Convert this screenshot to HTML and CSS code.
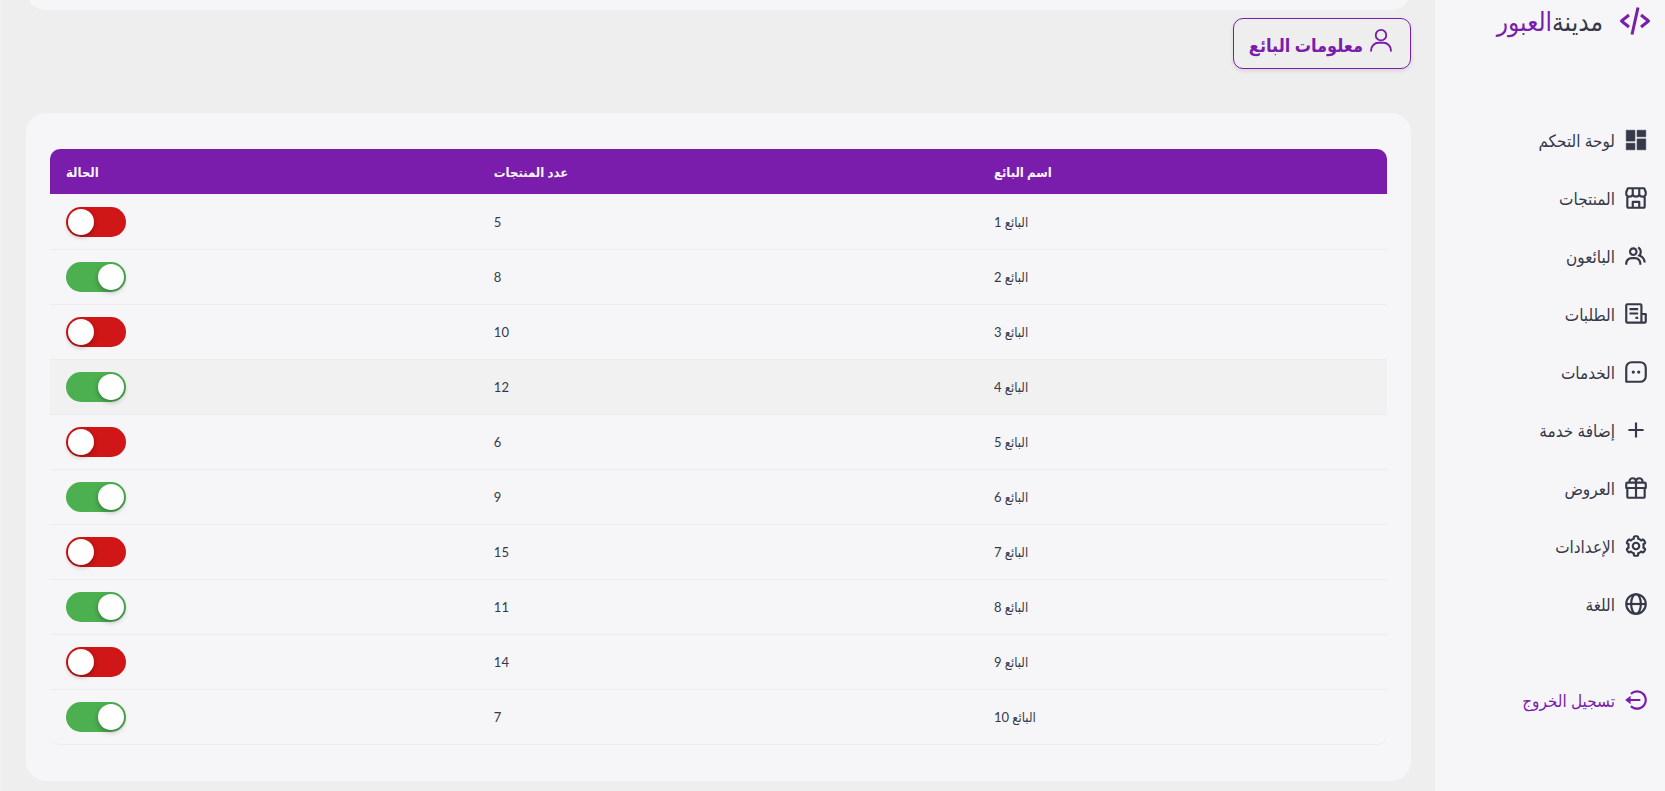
FILE: index.html
```html
<!DOCTYPE html>
<html lang="ar" dir="rtl">
<head>
<meta charset="utf-8">
<title>مدينة العبور</title>
<link rel="stylesheet" href="styles.css">
</head>
<body>
<aside class="sidebar">
  <a class="logo" href="#">
    <svg class="logo-icon" viewBox="0 0 24 24" aria-hidden="true"><path d="m7.375 16.781 1.25-1.562L4.601 12l4.024-3.219-1.25-1.562-5 4a1 1 0 0 0 0 1.562l5 4zm9.25-9.562-1.25 1.562L19.399 12l-4.024 3.219 1.25 1.562 5-4a1 1 0 0 0 0-1.562l-5-4zm-1.649-4.003-4 18-1.953-.434 4-18z"/></svg>
    <span class="logo-name"><span class="logo-first">مدينة</span><span>العبور</span></span>
  </a>
  <nav class="menu">
    <a class="item" href="#"><svg class="icon" viewBox="0 0 24 24" aria-hidden="true"><path d="M3 3h8v10H3zM3 15h8v6H3zM13 11h8v10h-8zM13 3h8v6h-8z" stroke="currentColor" stroke-width=".6" stroke-linejoin="round"/></svg><span>لوحة التحكم</span></a>
    <a class="item" href="#"><svg class="icon line" viewBox="0 0 24 24" aria-hidden="true"><path d="M4 11v9a1 1 0 0 0 1 1h14a1 1 0 0 0 1-1v-9M4.500 3h15L21 6.500v1.500a2.800 2.800 0 0 1-3 2.800c-1.300 0-2.500-.7-3-1.800-.5 1.100-1.700 1.800-3 1.800S9.500 10.100 9 9c-.5 1.100-1.700 1.800-3 1.800A2.800 2.800 0 0 1 3 8V6.500zM9 3v6M15 3v6M9 21v-5.500h6V21"/></svg><span>المنتجات</span></a>
    <a class="item" href="#"><svg class="icon" viewBox="0 0 24 24" aria-hidden="true"><path d="M16.604 11.048a5.67 5.67 0 0 0 .751-3.44c-.179-1.784-1.175-3.361-2.803-4.44l-1.105 1.666c1.119.742 1.800 1.799 1.918 2.974a3.693 3.693 0 0 1-1.072 2.986l-1.192 1.192 1.618.475C18.951 13.701 19 17.957 19 18h2c0-1.789-.956-5.285-4.396-6.952z"/><path d="M9.500 12c2.206 0 4-1.794 4-4s-1.794-4-4-4-4 1.794-4 4 1.794 4 4 4zm0-6c1.103 0 2 .897 2 2s-.897 2-2 2-2-.897-2-2 .897-2 2-2zm1.500 7H8c-3.309 0-6 2.691-6 6v1h2v-1c0-2.206 1.794-4 4-4h3c2.206 0 4 1.794 4 4v1h2v-1c0-3.309-2.691-6-6-6z"/></svg><span>البائعون</span></a>
    <a class="item" href="#"><svg class="icon line" viewBox="0 0 24 24" aria-hidden="true"><path d="M17 20H4a1 1 0 0 1-1-1V4a1 1 0 0 1 1-1h12a1 1 0 0 1 1 1zM17 20h3a1 1 0 0 0 1-1v-7h-4M6 7.500h8M6 11.500h8M11.500 15.500H14"/></svg><span>الطلبات</span></a>
    <a class="item" href="#"><svg class="icon line" viewBox="0 0 24 24" aria-hidden="true"><path d="M3 21V8a5 5 0 0 1 5-5h8a5 5 0 0 1 5 5v8a5 5 0 0 1-5 5z"/><circle class="dot" cx="9.500" cy="12" r="1.500"/><circle class="dot" cx="14.500" cy="12" r="1.500"/></svg><span>الخدمات</span></a>
    <a class="item" href="#"><svg class="icon" viewBox="0 0 24 24" aria-hidden="true"><path d="M19 11h-6V5h-2v6H5v2h6v6h2v-6h6z"/></svg><span>إضافة خدمة</span></a>
    <a class="item" href="#"><svg class="icon line" viewBox="0 0 24 24" aria-hidden="true"><path d="M4 12v8a1 1 0 0 0 1 1h14a1 1 0 0 0 1-1v-8M4 7h16a1 1 0 0 1 1 1v4H3V8a1 1 0 0 1 1-1zM12 7v14M12 7c0-2.500-1-4-3-4S6 4.500 6 5.500V7M12 7c0-2.500 1-4 3-4s3 1.500 3 2.500V7"/></svg><span>العروض</span></a>
    <a class="item" href="#"><svg class="icon" viewBox="0 0 24 24" aria-hidden="true"><path d="M12 16c2.206 0 4-1.794 4-4s-1.794-4-4-4-4 1.794-4 4 1.794 4 4 4zm0-6c1.084 0 2 .916 2 2s-.916 2-2 2-2-.916-2-2 .916-2 2-2z"/><path d="m2.845 16.136 1 1.730c.531.917 1.809 1.261 2.730.730l.529-.306A8.100 8.100 0 0 0 9 19.402V20c0 1.103.897 2 2 2h2c1.103 0 2-.897 2-2v-.598a8.132 8.132 0 0 0 1.896-1.111l.529.306c.923.530 2.198.188 2.731-.731l.999-1.729a2.001 2.001 0 0 0-.731-2.732l-.505-.292a7.718 7.718 0 0 0 0-2.224l.505-.292a2.002 2.002 0 0 0 .731-2.732l-.999-1.729c-.531-.920-1.808-1.265-2.731-.732l-.529.306A8.100 8.100 0 0 0 15 4.598V4c0-1.103-.897-2-2-2h-2c-1.103 0-2 .897-2 2v.598a8.132 8.132 0 0 0-1.896 1.111l-.529-.306c-.924-.531-2.200-.187-2.731.732l-.999 1.729a2.001 2.001 0 0 0 .731 2.732l.505.292a7.683 7.683 0 0 0 0 2.223l-.505.292a2.003 2.003 0 0 0-.731 2.733zm3.326-2.758A5.703 5.703 0 0 1 6 12c0-.462.058-.926.170-1.378a.999.999 0 0 0-.470-1.108l-1.123-.650.998-1.729 1.145.662a.997.997 0 0 0 1.188-.142 6.071 6.071 0 0 1 2.384-1.399A1 1 0 0 0 11 5.300V4h2v1.300a1 1 0 0 0 .708.956 6.083 6.083 0 0 1 2.384 1.399.999.999 0 0 0 1.188.142l1.144-.661 1 1.729-1.124.649a1 1 0 0 0-.470 1.108c.112.452.170.916.170 1.378 0 .461-.058.925-.171 1.378a1 1 0 0 0 .471 1.108l1.123.649-.998 1.729-1.145-.661a.996.996 0 0 0-1.188.142 6.071 6.071 0 0 1-2.384 1.399A1 1 0 0 0 13 18.700l.002 1.300H11v-1.300a1 1 0 0 0-.708-.956 6.083 6.083 0 0 1-2.384-1.399.992.992 0 0 0-1.188-.141l-1.144.662-1-1.729 1.124-.651a1 1 0 0 0 .471-1.108z"/></svg><span>الإعدادات</span></a>
    <a class="item" href="#"><svg class="icon line" viewBox="0 0 24 24" aria-hidden="true"><circle cx="12" cy="12" r="9"/><ellipse cx="12" cy="12" rx="4.500" ry="9"/><path d="M3 12h18"/></svg><span>اللغة</span></a>
  </nav>
  <a class="item logout" href="#"><svg class="icon" viewBox="0 0 24 24" aria-hidden="true"><path d="m2 12 5 4v-3h9v-2H7V8z"/><path d="M13.001 2.999a8.938 8.938 0 0 0-6.364 2.637L8.051 7.050c1.322-1.322 3.080-2.051 4.950-2.051s3.628.729 4.950 2.051 2.051 3.080 2.051 4.950-.729 3.628-2.051 4.950-3.080 2.051-4.950 2.051-3.628-.729-4.950-2.051l-1.414 1.414c1.699 1.700 3.959 2.637 6.364 2.637s4.665-.937 6.364-2.637c1.700-1.699 2.637-3.959 2.637-6.364s-.937-4.665-2.637-6.364a8.938 8.938 0 0 0-6.364-2.637z"/></svg><span>تسجيل الخروج</span></a>
</aside>
<main class="content">
  <div class="card-end"></div>
  <button class="info-button" type="button">
    <svg class="user-icon" viewBox="0 0 24 24" aria-hidden="true"><circle cx="12" cy="7" r="4.500"/><path d="M3.500 21v-1A6.500 6.500 0 0 1 10 13.500h4a6.500 6.500 0 0 1 6.500 6.500v1"/></svg>
    <span class="info-label">معلومات البائع</span>
  </button>
  <section class="card">
    <table class="sellers">
      <colgroup><col class="col-name"><col class="col-count"><col class="col-state"></colgroup>
      <thead><tr><th>اسم البائع</th><th>عدد المنتجات</th><th>الحالة</th></tr></thead>
      <tbody>
        <tr><td>البائع 1</td><td>5</td><td><input class="toggle" type="checkbox" aria-label="حالة البائع 1"></td></tr>
        <tr><td>البائع 2</td><td>8</td><td><input class="toggle" type="checkbox" aria-label="حالة البائع 2" checked></td></tr>
        <tr><td>البائع 3</td><td>10</td><td><input class="toggle" type="checkbox" aria-label="حالة البائع 3"></td></tr>
        <tr class="active"><td>البائع 4</td><td>12</td><td><input class="toggle" type="checkbox" aria-label="حالة البائع 4" checked></td></tr>
        <tr><td>البائع 5</td><td>6</td><td><input class="toggle" type="checkbox" aria-label="حالة البائع 5"></td></tr>
        <tr><td>البائع 6</td><td>9</td><td><input class="toggle" type="checkbox" aria-label="حالة البائع 6" checked></td></tr>
        <tr><td>البائع 7</td><td>15</td><td><input class="toggle" type="checkbox" aria-label="حالة البائع 7"></td></tr>
        <tr><td>البائع 8</td><td>11</td><td><input class="toggle" type="checkbox" aria-label="حالة البائع 8" checked></td></tr>
        <tr><td>البائع 9</td><td>14</td><td><input class="toggle" type="checkbox" aria-label="حالة البائع 9"></td></tr>
        <tr><td>البائع 10</td><td>7</td><td><input class="toggle" type="checkbox" aria-label="حالة البائع 10" checked></td></tr>
      </tbody>
    </table>
  </section>
</main>
</body>
</html>
```
FILE: styles.css
```css
* { box-sizing: border-box; }
body {
  margin: 0;
  display: flex;
  min-height: 100vh;
  background: #eee;
  color: #363949;
  font-family: Lato, "DejaVu Sans Condensed", "DejaVu Sans", sans-serif;
  font-size: 14px;
}
a { color: inherit; text-decoration: none; }

.sidebar {
  flex: 0 0 230px;
  background: #f6f6f9;
}
.logo {
  display: flex;
  align-items: center;
  gap: 14px;
  height: 42px;
  padding-right: 12px;
  color: #7a1cac;
  font-size: 26px;
}
.logo-icon { width: 36px; height: 36px; fill: currentColor; }
.logo-first { color: #363949; }
.menu { margin-top: 69px; }
.item {
  display: flex;
  align-items: center;
  gap: 8px;
  height: 58px;
  padding-right: 16px;
  font-size: 17px;
}
.icon { width: 26px; height: 26px; fill: currentColor; }
.line { fill: none; stroke: currentColor; stroke-width: 2; stroke-linejoin: round; }
.dot { fill: currentColor; stroke: none; }
.logout { margin-top: 38px; color: #7a1cac; }

.content {
  flex: 1;
  min-width: 0;
  padding: 0 24px 10px;
  border-left: 2px solid #f0f0f0;
}
.card-end {
  height: 10px;
  overflow: hidden;
  display: flex;
  align-items: flex-end;
}
.card-end::before {
  content: "";
  flex: 1 0 0;
  height: 40px;
  border-radius: 20px;
  background: #f6f6f9;
}
.info-button {
  display: flex;
  align-items: center;
  gap: 4px;
  height: 51px;
  margin: 8px 0 44px;
  padding: 0 15px;
  border: 1px solid #7a1cac;
  border-radius: 10px;
  background: #eee;
  box-shadow: 0 2px 4px rgba(0, 0, 0, 0.1);
  color: #7a1cac;
  font: bold 18px Lato, "DejaVu Sans Condensed", "DejaVu Sans", sans-serif;
}
.info-label { padding-top: 2px; }
.user-icon {
  width: 28px;
  height: 28px;
  margin-bottom: 6px;
  fill: none;
  stroke: currentColor;
  stroke-width: 1.6;
}

.card {
  padding: 36px 24px;
  border-radius: 20px;
  background: #f6f6f9;
}
.sellers {
  width: 100%;
  table-layout: fixed;
  border-spacing: 0;
}
.col-name { width: 30.6%; }
.col-count { width: 37.4%; }
.col-state { width: 32%; }
.sellers th {
  height: 46px;
  padding: 0 16px;
  border-bottom: 1px solid #f1f1f3;
  background: #7a1cac;
  color: #f6f6f9;
  font-size: 13px;
  text-align: left;
}
.sellers th:first-child { border-top-right-radius: 10px; }
.sellers th:last-child { border-top-left-radius: 10px; }
.sellers td {
  height: 55px;
  padding: 0 16px;
  border-bottom: 1px solid #ececee;
  font-size: 13px;
  text-align: left;
}
.sellers tr:last-child td:first-child { border-bottom-right-radius: 10px; }
.sellers tr:last-child td:last-child { border-bottom-left-radius: 10px; }
.active td { background: #f1f1f1; }

.toggle {
  appearance: none;
  display: block;
  width: 60px;
  height: 30px;
  margin: 0 auto 0 0;
  padding: 2px;
  border-radius: 15px;
  background: #d01616;
  direction: ltr;
  cursor: pointer;
}
.toggle::before {
  content: "";
  display: block;
  width: 26px;
  height: 26px;
  border-radius: 50%;
  background: #fff;
  box-shadow: 0 2px 5px rgba(0, 0, 0, 0.3);
}
.toggle:checked { background: #4caf50; }
.toggle:checked::before { margin-left: 30px; }
```
